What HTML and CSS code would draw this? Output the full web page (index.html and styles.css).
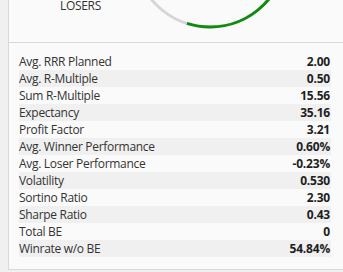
FILE: index.html
```html
<!DOCTYPE html>
<html>
<head>
<meta charset="utf-8">
<link rel="stylesheet" href="styles.css">
</head>
<body>
<div class="card">
  <div class="summary">
    <div class="legend">
      <div class="legend-label">LOSERS</div>
    </div>
    <svg class="donut" width="160" height="160" viewBox="0 0 160 160">
      <circle cx="80" cy="80" r="76" fill="none" stroke="#d6d6d6" stroke-width="3"/>
      <circle cx="80" cy="80" r="76" fill="none" stroke="#118a11" stroke-width="3" stroke-dasharray="261.9 477.5" transform="rotate(-90 80 80)"/>
    </svg>
  </div>
  <div class="stats">
    <div class="row"><span class="label">Avg. RRR Planned</span><span class="value">2.00</span></div>
    <div class="row"><span class="label">Avg. R-Multiple</span><span class="value">0.50</span></div>
    <div class="row"><span class="label">Sum R-Multiple</span><span class="value">15.56</span></div>
    <div class="row"><span class="label">Expectancy</span><span class="value">35.16</span></div>
    <div class="row"><span class="label">Profit Factor</span><span class="value">3.21</span></div>
    <div class="row"><span class="label">Avg. Winner Performance</span><span class="value">0.60%</span></div>
    <div class="row"><span class="label">Avg. Loser Performance</span><span class="value">-0.23%</span></div>
    <div class="row"><span class="label">Volatility</span><span class="value">0.530</span></div>
    <div class="row"><span class="label">Sortino Ratio</span><span class="value">2.30</span></div>
    <div class="row"><span class="label">Sharpe Ratio</span><span class="value">0.43</span></div>
    <div class="row"><span class="label">Total BE</span><span class="value">0</span></div>
    <div class="row"><span class="label">Winrate w/o BE</span><span class="value">54.84%</span></div>
  </div>
</div>
</body>
</html>
```
FILE: styles.css
```css
html, body {
  margin: 0;
  padding: 0;
  overflow: hidden;
}
body {
  background: #f0f0f0;
  font-family: "Open Sans", "Noto Sans", sans-serif;
  font-size: 12px;
  color: #333;
}
.card {
  margin-left: 8px;
  width: 350px;
  box-sizing: border-box;
  background: #fafafa;
  border: 1px solid #d9d9d9;
  border-top: none;
}
.summary {
  display: flex;
  align-items: flex-end;
  height: 42px;
  overflow: hidden;
  border-bottom: 1px solid #d9d9d9;
}
.legend {
  width: 121px;
  box-sizing: border-box;
  padding-left: 22px;
  padding-bottom: 30px;
  text-align: center;
  flex: none;
}
.legend-label {
  font-size: 12px;
  line-height: 12px;
  letter-spacing: -0.3px;
}
.donut {
  display: block;
  flex: none;
  margin-bottom: 11px;
}
.stats {
  padding: 10px 26px 12px 10px;
}
.row {
  display: flex;
  justify-content: space-between;
  height: 17px;
  line-height: 17px;
  white-space: nowrap;
}
.row:nth-child(even) {
  background: #f0f0f0;
}
.label {
  letter-spacing: -0.3px;
}
.value {
  font-weight: 700;
  color: #1e1e1e;
  padding-right: 1px;
  letter-spacing: -0.2px;
}
```
